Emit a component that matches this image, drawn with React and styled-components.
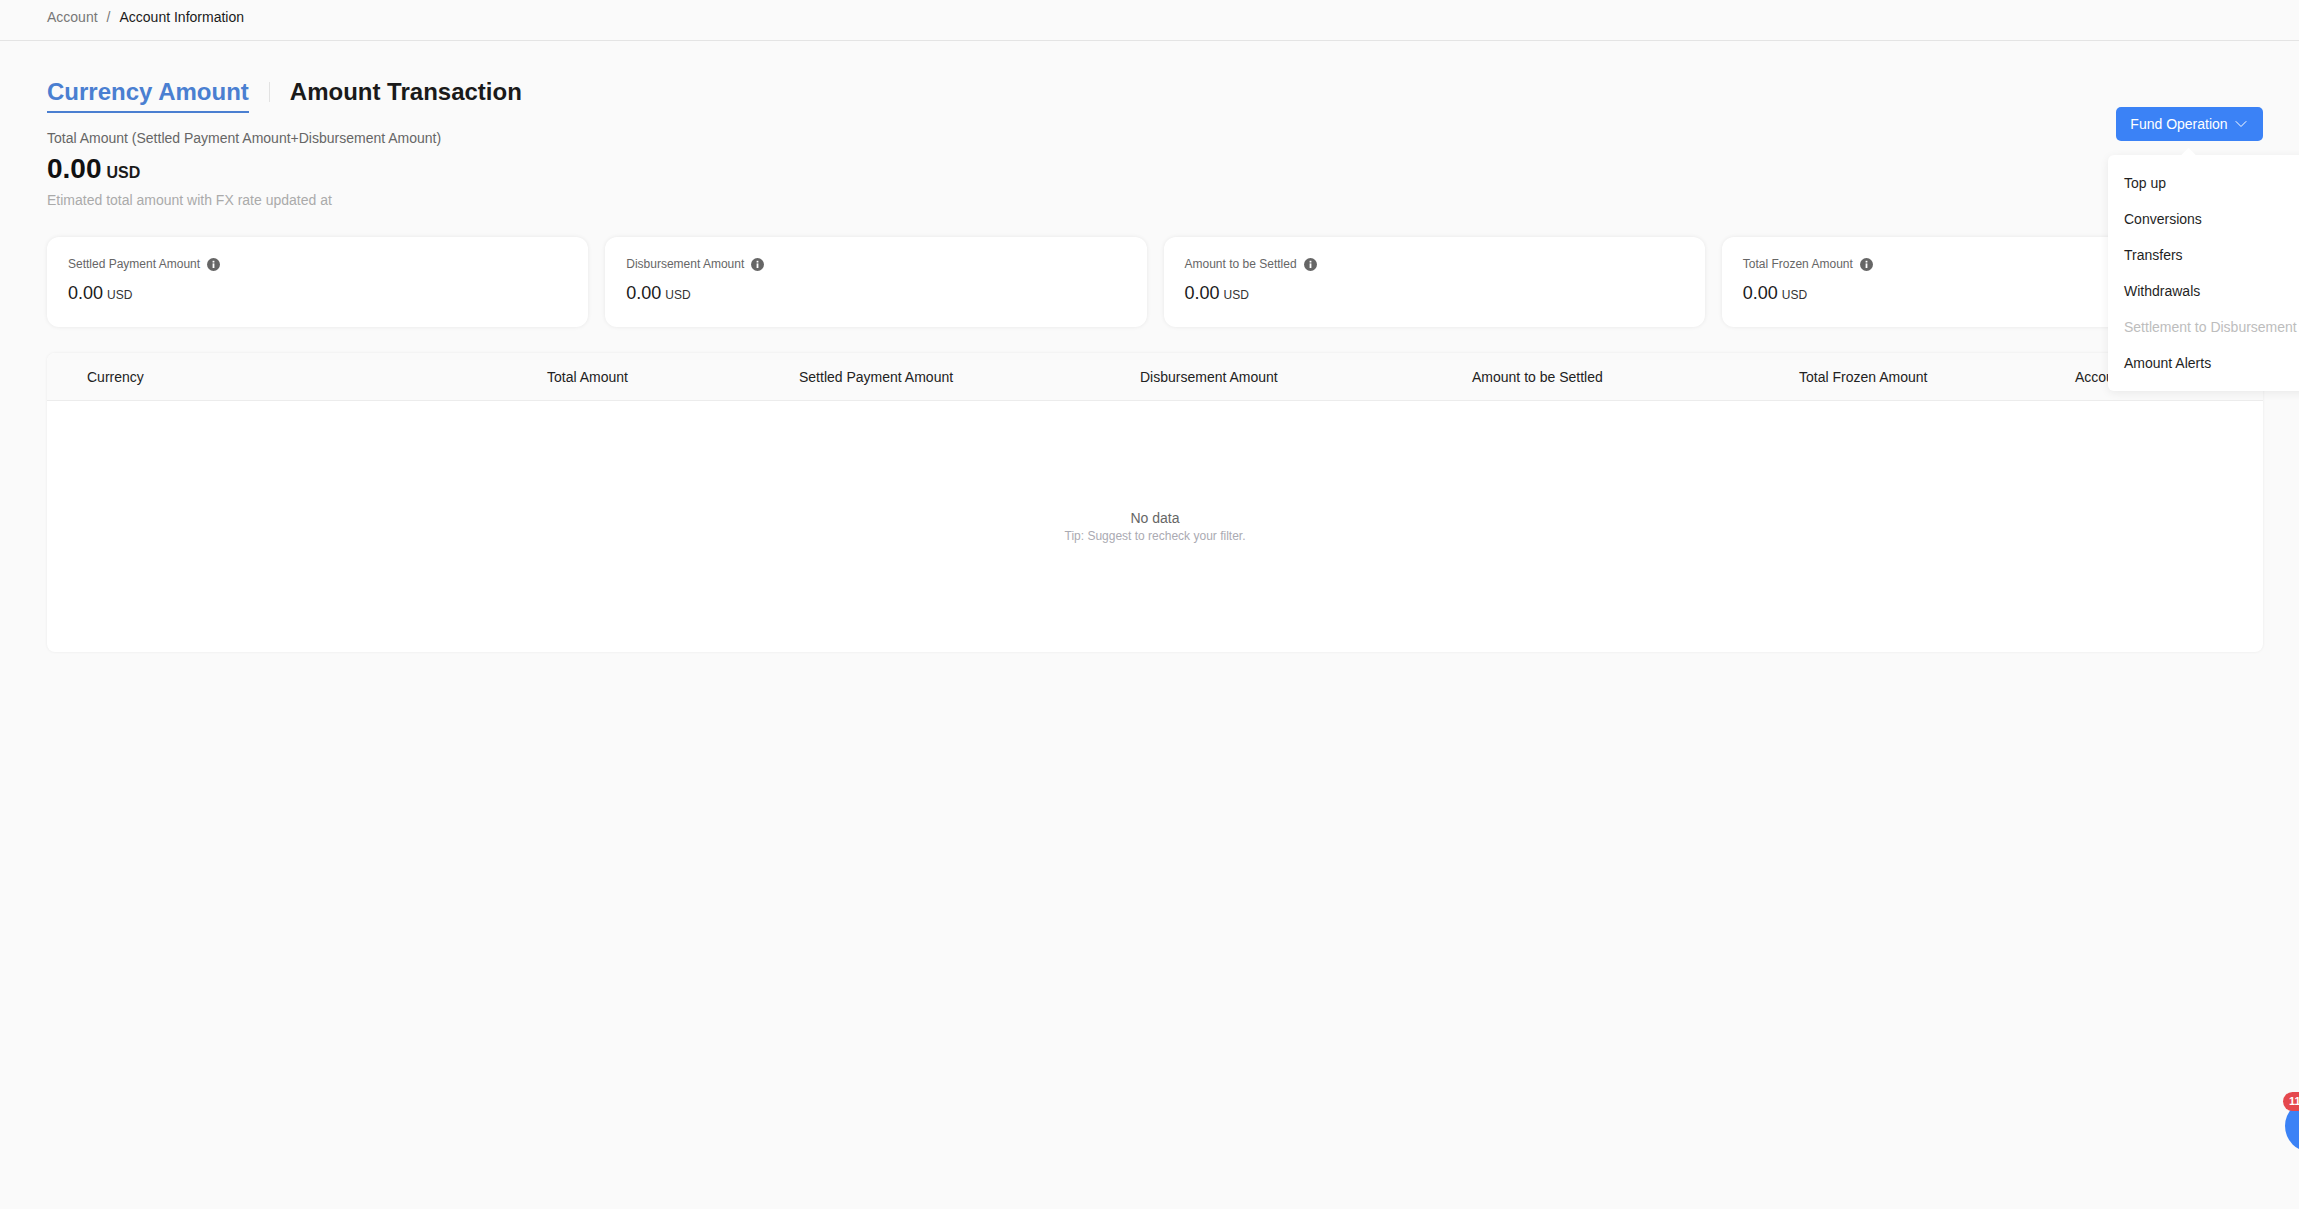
import styled, { createGlobalStyle } from "styled-components"
import { ChevronDown } from "lucide-react"

const GlobalStyle = createGlobalStyle`
    html, body {
        margin: 0;
        padding: 0;
        height: 100%;
        overflow: hidden;
        background: #fafafa;
        font-family: "Liberation Sans", Arial, sans-serif;
        color: #1a1a1a;
    }
`
const Page = styled.div`
    position: relative;
    width: 2299px;
    height: 1209px;
    overflow: hidden;
    background: #fafafa;
`
const Breadcrumb = styled.div`
    height: 41px;
    box-sizing: border-box;
    padding: 9px 47px 0;
    border-bottom: 1px solid #e4e4e4;
    font-size: 14px;
    line-height: 17px;
    color: #777;
    display: flex;
    gap: 9px;
`
const Crumb = styled.span`
    color: ${(p) => (p.$current ? "#1a1a1a" : "#777")};
`
const Content = styled.div`
    padding: 30px 36px 0 47px;
`
const TopRow = styled.div`
    display: flex;
    justify-content: space-between;
    align-items: flex-start;
`
const Tabs = styled.div`
    display: flex;
    align-items: center;
`
const Tab = styled.div`
    font-size: 24px;
    line-height: 41px;
    height: 40px;
    font-weight: 700;
    color: ${(p) => (p.$active ? "#4a7fd1" : "#1a1a1a")};
    border-bottom: 2px solid ${(p) => (p.$active ? "#4a7fd1" : "transparent")};
`
const TabDivider = styled.div`
    width: 1px;
    height: 20px;
    background: #e2e2e2;
    margin: 0 20px;
`
const FundButton = styled.button`
    width: 147px;
    height: 34px;
    margin-top: -6px;
    padding: 0 0 0 2px;
    border: 0;
    border-radius: 5px;
    background: #3b82f6;
    color: #fff;
    font: 14px "Liberation Sans", Arial, sans-serif;
    display: flex;
    align-items: center;
    justify-content: center;
    gap: 3px;
`
const Menu = styled.div`
    position: absolute;
    left: 2108px;
    top: 155px;
    width: 240px;
    height: 236px;
    box-sizing: border-box;
    padding: 10px 16px;
    background: #fff;
    border-radius: 6px;
    box-shadow: 0 2px 10px rgba(0, 0, 0, 0.07);
    z-index: 5;
    &::before {
        content: "";
        position: absolute;
        left: 75px;
        top: -5px;
        width: 11px;
        height: 11px;
        background: #fff;
        transform: rotate(45deg);
    }
`
const MenuItem = styled.div`
    height: 36px;
    line-height: 36px;
    font-size: 14px;
    white-space: nowrap;
    color: ${(p) => (p.$disabled ? "#bdbdbd" : "#1f1f1f")};
`
const Summary = styled.div`
    margin-top: 17px;
`
const SummaryLabel = styled.div`
    font-size: 14px;
    line-height: 17px;
    color: #666;
`
const Total = styled.div`
    display: flex;
    align-items: baseline;
    gap: 5px;
    margin-top: 5px;
    line-height: 34px;
`
const TotalValue = styled.span`
    font-size: 28px;
    font-weight: 700;
    color: #111;
`
const TotalUnit = styled.span`
    font-size: 16px;
    font-weight: 700;
    color: #1a1a1a;
`
const Hint = styled.div`
    margin-top: 2px;
    font-size: 14px;
    line-height: 17px;
    color: #aaa;
`
const Cards = styled.div`
    display: grid;
    grid-template-columns: repeat(4, 1fr);
    gap: 17px;
    margin-top: 28px;
    width: 2216px;
`
const Card = styled.div`
    height: 90px;
    box-sizing: border-box;
    padding: 20px 21px 0;
    background: #fff;
    border-radius: 12px;
    box-shadow: 0 0 4px rgba(0, 0, 0, 0.08);
`
const CardLabel = styled.div`
    display: flex;
    align-items: center;
    gap: 7px;
    font-size: 12px;
    line-height: 14px;
    color: #666;
`
const CardAmount = styled.div`
    display: flex;
    align-items: baseline;
    gap: 4px;
    margin-top: 11px;
    line-height: 22px;
`
const CardValue = styled.span`
    font-size: 18px;
    color: #1a1a1a;
`
const CardUnit = styled.span`
    font-size: 12px;
    color: #333;
`
const Table = styled.div`
    width: 2216px;
    margin-top: 26px;
    background: #fff;
    border-radius: 8px;
    box-shadow: 0 0 3px rgba(0, 0, 0, 0.07);
    overflow: hidden;
`
const TableHead = styled.div`
    display: grid;
    grid-template-columns: 460px 252px 341px 332px 327px 276px 1fr;
    height: 48px;
    box-sizing: border-box;
    padding-left: 40px;
    align-items: center;
    background: #fafafa;
    border-bottom: 1px solid #ececec;
    font-size: 14px;
    color: #222;
    white-space: nowrap;
`
const Empty = styled.div`
    height: 251px;
    display: flex;
    flex-direction: column;
    align-items: center;
    padding-top: 109px;
    box-sizing: border-box;
`
const EmptyTitle = styled.div`
    font-size: 14px;
    line-height: 17px;
    color: #666;
`
const EmptyTip = styled.div`
    margin-top: 2px;
    font-size: 12px;
    line-height: 14px;
    color: #aaaab2;
`
const Float = styled.div`
    position: absolute;
    left: 2285px;
    top: 1100px;
    width: 52px;
    height: 52px;
    border-radius: 50%;
    background: #3b82f6;
`
const Badge = styled.div`
    position: absolute;
    left: -2px;
    top: -8px;
    width: 34px;
    height: 19px;
    box-sizing: border-box;
    padding-left: 6px;
    border-radius: 10px;
    background: #e5484d;
    color: #fff;
    font-size: 11px;
    font-weight: 700;
    line-height: 19px;
`

const InfoIcon = () => (
    <svg width="13" height="13" viewBox="0 0 13 13">
        <circle cx="6.5" cy="6.5" r="6.5" fill="#666" />
        <rect x="5.6" y="5.4" width="1.8" height="4.6" fill="#fff" />
        <rect x="5.6" y="2.8" width="1.8" height="1.7" fill="#fff" />
    </svg>
)

const cards = ["Settled Payment Amount", "Disbursement Amount", "Amount to be Settled", "Total Frozen Amount"]
const columns = ["Currency", "Total Amount", "Settled Payment Amount", "Disbursement Amount", "Amount to be Settled", "Total Frozen Amount", "Account"]
const menuItems = ["Top up", "Conversions", "Transfers", "Withdrawals", "Settlement to Disbursement", "Amount Alerts"]

const App = () => {
  return (
        <Page>
            <GlobalStyle/>
            <Breadcrumb>
                <Crumb>Account</Crumb>
                <Crumb>/</Crumb>
                <Crumb $current>Account Information</Crumb>
            </Breadcrumb>
            <Content>
                <Tabs>
                    <Tab $active>Currency Amount</Tab>
                    <TabDivider/>
                    <Tab>Amount Transaction</Tab>
                </Tabs>
                <TopRow>
                    <Summary>
                        <SummaryLabel>Total Amount (Settled Payment Amount+Disbursement Amount)</SummaryLabel>
                        <Total>
                            <TotalValue>0.00</TotalValue>
                            <TotalUnit>USD</TotalUnit>
                        </Total>
                        <Hint>Etimated total amount with FX rate updated at</Hint>
                    </Summary>
                    <FundButton>
                        Fund Operation
                        <ChevronDown size={20} strokeWidth={1.2}/>
                    </FundButton>
                </TopRow>
                <Cards>
                    {cards.map((label) => (
                        <Card key={label}>
                            <CardLabel>{label}<InfoIcon/></CardLabel>
                            <CardAmount>
                                <CardValue>0.00</CardValue>
                                <CardUnit>USD</CardUnit>
                            </CardAmount>
                        </Card>
                    ))}
                </Cards>
                <Table>
                    <TableHead>
                        {columns.map((c) => <span key={c}>{c}</span>)}
                    </TableHead>
                    <Empty>
                        <EmptyTitle>No data</EmptyTitle>
                        <EmptyTip>Tip: Suggest to recheck your filter.</EmptyTip>
                    </Empty>
                </Table>
            </Content>
            <Menu>
                {menuItems.map((m) => (
                    <MenuItem key={m} $disabled={m.startsWith("Settlement")}>{m}</MenuItem>
                ))}
            </Menu>
            <Float>
                <Badge>11</Badge>
            </Float>
        </Page>
  )
}

export default App
